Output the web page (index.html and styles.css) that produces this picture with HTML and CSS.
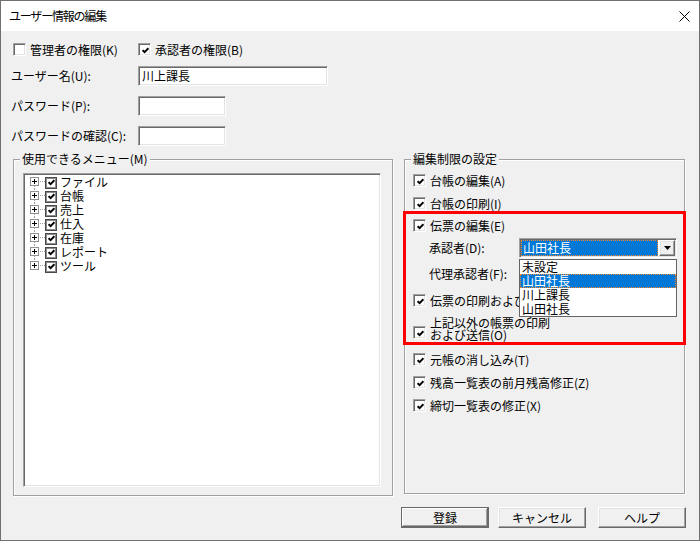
FILE: index.html
```html
<!DOCTYPE html>
<html lang="ja">

<head>
  <meta charset="UTF-8">
  <meta name="viewport" content="width=device-width, initial-scale=1.0">
  <title>ユーザー情報の編集</title>
  <link rel="stylesheet" href="styles.css">
</head>

<body>
  <div class="window">
    <!-- title bar -->
    <div class="titlebar">
      <span class="title">ユーザー情報の編集</span>
      <svg class="close" width="11" height="11" viewBox="0 0 11 11">
        <path d="M0.5 0.5L10.5 10.5M10.5 0.5L0.5 10.5" stroke="#000" stroke-width="1" />
      </svg>
    </div>

    <div class="body">
      <div class="perm-row">
        <label class="check first"><span class="cb"></span>管理者の権限(K)</label>
        <label class="check"><span class="cb"><svg viewBox="0 0 7 7" width="7" height="7"><polyline points="0.6,3.2 2.6,5.2 6.4,1.2" fill="none" stroke="#000" stroke-width="1.9" /></svg></span>承認者の権限(B)</label>
      </div>

      <div class="form">
        <span class="label">ユーザー名(U):</span>
        <div class="input wide">川上課長</div>
        <span class="label">パスワード(P):</span>
        <div class="input short"></div>
        <span class="label">パスワードの確認(C):</span>
        <div class="input short"></div>
      </div>

      <div class="groups">
        <!-- menu tree -->
        <div class="group menu-group">
          <span class="legend">使用できるメニュー(M)</span>
          <div class="tree">
            <div class="node first">
              <svg class="twig" width="15" height="14" viewBox="0 0 15 14"><rect x="0.5" y="2.5" width="8" height="8" fill="#fff" stroke="#919191" /><path d="M2 6.5h5M4.5 4v5" stroke="#000" /><path d="M10 6.5h5M4.5 11v3" stroke="#a0a0a0" stroke-dasharray="1 1" /></svg>
              <span class="tcb"><svg viewBox="0 0 7 7" width="7" height="7"><polyline points="0.6,3.2 2.6,5.2 6.4,1.2" fill="none" stroke="#000" stroke-width="1.9" /></svg></span>
              <span class="node-text">ファイル</span>
            </div>
            <div class="node">
              <svg class="twig" width="15" height="14" viewBox="0 0 15 14"><rect x="0.5" y="2.5" width="8" height="8" fill="#fff" stroke="#919191" /><path d="M2 6.5h5M4.5 4v5" stroke="#000" /><path d="M10 6.5h5M4.5 0v2M4.5 11v3" stroke="#a0a0a0" stroke-dasharray="1 1" /></svg>
              <span class="tcb"><svg viewBox="0 0 7 7" width="7" height="7"><polyline points="0.6,3.2 2.6,5.2 6.4,1.2" fill="none" stroke="#000" stroke-width="1.9" /></svg></span>
              <span class="node-text">台帳</span>
            </div>
            <div class="node">
              <svg class="twig" width="15" height="14" viewBox="0 0 15 14"><rect x="0.5" y="2.5" width="8" height="8" fill="#fff" stroke="#919191" /><path d="M2 6.5h5M4.5 4v5" stroke="#000" /><path d="M10 6.5h5M4.5 0v2M4.5 11v3" stroke="#a0a0a0" stroke-dasharray="1 1" /></svg>
              <span class="tcb"><svg viewBox="0 0 7 7" width="7" height="7"><polyline points="0.6,3.2 2.6,5.2 6.4,1.2" fill="none" stroke="#000" stroke-width="1.9" /></svg></span>
              <span class="node-text">売上</span>
            </div>
            <div class="node">
              <svg class="twig" width="15" height="14" viewBox="0 0 15 14"><rect x="0.5" y="2.5" width="8" height="8" fill="#fff" stroke="#919191" /><path d="M2 6.5h5M4.5 4v5" stroke="#000" /><path d="M10 6.5h5M4.5 0v2M4.5 11v3" stroke="#a0a0a0" stroke-dasharray="1 1" /></svg>
              <span class="tcb"><svg viewBox="0 0 7 7" width="7" height="7"><polyline points="0.6,3.2 2.6,5.2 6.4,1.2" fill="none" stroke="#000" stroke-width="1.9" /></svg></span>
              <span class="node-text">仕入</span>
            </div>
            <div class="node">
              <svg class="twig" width="15" height="14" viewBox="0 0 15 14"><rect x="0.5" y="2.5" width="8" height="8" fill="#fff" stroke="#919191" /><path d="M2 6.5h5M4.5 4v5" stroke="#000" /><path d="M10 6.5h5M4.5 0v2M4.5 11v3" stroke="#a0a0a0" stroke-dasharray="1 1" /></svg>
              <span class="tcb"><svg viewBox="0 0 7 7" width="7" height="7"><polyline points="0.6,3.2 2.6,5.2 6.4,1.2" fill="none" stroke="#000" stroke-width="1.9" /></svg></span>
              <span class="node-text">在庫</span>
            </div>
            <div class="node">
              <svg class="twig" width="15" height="14" viewBox="0 0 15 14"><rect x="0.5" y="2.5" width="8" height="8" fill="#fff" stroke="#919191" /><path d="M2 6.5h5M4.5 4v5" stroke="#000" /><path d="M10 6.5h5M4.5 0v2M4.5 11v3" stroke="#a0a0a0" stroke-dasharray="1 1" /></svg>
              <span class="tcb"><svg viewBox="0 0 7 7" width="7" height="7"><polyline points="0.6,3.2 2.6,5.2 6.4,1.2" fill="none" stroke="#000" stroke-width="1.9" /></svg></span>
              <span class="node-text">レポート</span>
            </div>
            <div class="node">
              <svg class="twig" width="15" height="14" viewBox="0 0 15 14"><rect x="0.5" y="2.5" width="8" height="8" fill="#fff" stroke="#919191" /><path d="M2 6.5h5M4.5 4v5" stroke="#000" /><path d="M10 6.5h5M4.5 0v2" stroke="#a0a0a0" stroke-dasharray="1 1" /></svg>
              <span class="tcb"><svg viewBox="0 0 7 7" width="7" height="7"><polyline points="0.6,3.2 2.6,5.2 6.4,1.2" fill="none" stroke="#000" stroke-width="1.9" /></svg></span>
              <span class="node-text">ツール</span>
            </div>
          </div>
        </div>

        <!-- edit restrictions -->
        <div class="group edit-group">
          <span class="legend">編集制限の設定</span>
          <div class="rows">
            <label class="check opt"><span class="cb"><svg viewBox="0 0 7 7" width="7" height="7"><polyline points="0.6,3.2 2.6,5.2 6.4,1.2" fill="none" stroke="#000" stroke-width="1.9" /></svg></span>台帳の編集(A)</label>
            <label class="check opt gap"><span class="cb"><svg viewBox="0 0 7 7" width="7" height="7"><polyline points="0.6,3.2 2.6,5.2 6.4,1.2" fill="none" stroke="#000" stroke-width="1.9" /></svg></span>台帳の印刷(I)</label>

            <div class="highlight">
              <label class="check opt"><span class="cb"><svg viewBox="0 0 7 7" width="7" height="7"><polyline points="0.6,3.2 2.6,5.2 6.4,1.2" fill="none" stroke="#000" stroke-width="1.9" /></svg></span>伝票の編集(E)</label>
              <div class="approver">
                <span class="approver-label">承認者(D):</span>
                <div class="combo">
                  <span class="combo-value">山田社長</span>
                  <span class="combo-btn"><svg width="7" height="4" viewBox="0 0 7 4"><path d="M0 0h7L3.5 4z" fill="#000" /></svg></span>
                  <!-- open list -->
                  <div class="combo-list">
                    <div class="combo-item">未設定</div>
                    <div class="combo-item selected">山田社長</div>
                    <div class="combo-item">川上課長</div>
                    <div class="combo-item">山田社長</div>
                  </div>
                </div>
              </div>
              <div class="approver second">
                <span class="approver-label">代理承認者(F):</span>
              </div>
              <label class="check opt gap hidden-tail"><span class="cb"><svg viewBox="0 0 7 7" width="7" height="7"><polyline points="0.6,3.2 2.6,5.2 6.4,1.2" fill="none" stroke="#000" stroke-width="1.9" /></svg></span>伝票の印刷および送信(P)</label>
              <label class="check opt two-line"><span class="cb"><svg viewBox="0 0 7 7" width="7" height="7"><polyline points="0.6,3.2 2.6,5.2 6.4,1.2" fill="none" stroke="#000" stroke-width="1.9" /></svg></span><span>上記以外の帳票の印刷<br>および送信(O)</span></label>
            </div>

            <label class="check opt after"><span class="cb"><svg viewBox="0 0 7 7" width="7" height="7"><polyline points="0.6,3.2 2.6,5.2 6.4,1.2" fill="none" stroke="#000" stroke-width="1.9" /></svg></span>元帳の消し込み(T)</label>
            <label class="check opt gap"><span class="cb"><svg viewBox="0 0 7 7" width="7" height="7"><polyline points="0.6,3.2 2.6,5.2 6.4,1.2" fill="none" stroke="#000" stroke-width="1.9" /></svg></span>残高一覧表の前月残高修正(Z)</label>
            <label class="check opt gap"><span class="cb"><svg viewBox="0 0 7 7" width="7" height="7"><polyline points="0.6,3.2 2.6,5.2 6.4,1.2" fill="none" stroke="#000" stroke-width="1.9" /></svg></span>締切一覧表の修正(X)</label>
          </div>
        </div>
      </div>

      <div class="buttons">
        <button class="btn default">登録</button>
        <button class="btn cancel">キャンセル</button>
        <button class="btn help">ヘルプ</button>
      </div>
    </div>
  </div>
</body>

</html>
```

FILE: styles.css
```css
* {
  margin: 0;
  padding: 0;
  box-sizing: border-box;
}

body {
  background: #fff;
  font-family: "Noto Sans CJK JP", "Liberation Sans", sans-serif;
  font-size: 12px;
  color: #000;
}

.window {
  width: 700px;
  height: 541px;
  border: 1px solid #707070;
  background: #f0f0f0;
  display: flex;
  flex-direction: column;
}

/* title bar */
.titlebar {
  height: 30px;
  flex-shrink: 0;
  background: #fff;
  display: flex;
  align-items: center;
  justify-content: space-between;
  padding: 0 9px 0 8px;
}

.title {
  line-height: 14px;
  letter-spacing: -1.2px;
}

.close {
  display: block;
  margin-top: 1px;
}

.body {
  padding: 12px 12px 0 10px;
}

/* checkboxes */
.check {
  display: flex;
  align-items: center;
  gap: 4px;
  height: 13px;
  line-height: 13px;
  white-space: nowrap;
}

.cb {
  width: 13px;
  height: 13px;
  flex-shrink: 0;
  background: #fff;
  border: 1px solid;
  border-color: #a0a0a0 #fff #fff #a0a0a0;
  box-shadow: inset 1px 1px #696969, inset -1px -1px #e3e3e3;
  display: flex;
  align-items: center;
  justify-content: center;
  padding: 1px 0 0 1px;
}

.cb svg {
  display: block;
}

.perm-row {
  display: flex;
  margin-left: 2px;
}

.perm-row .first {
  width: 125px;
}

/* text fields */
.form {
  display: grid;
  grid-template-columns: 127px auto;
  row-gap: 10px;
  align-items: center;
  justify-items: start;
  margin-top: 10px;
}

.label {
  line-height: 14px;
}

.input {
  height: 20px;
  background: #fff;
  border: 1px solid;
  border-color: #a0a0a0 #fff #fff #a0a0a0;
  box-shadow: inset 1px 1px #696969, inset -1px -1px #e3e3e3;
  padding: 0 3px;
  line-height: 18px;
}

.input.wide {
  width: 190px;
}

.input.short {
  width: 88px;
}

/* group boxes */
.groups {
  display: grid;
  grid-template-columns: 380px 281px;
  column-gap: 11px;
  align-items: start;
  margin: 13px 0 0 2px;
}

.group {
  border: 1px solid #a0a0a0;
  box-shadow: 1px 1px 0 #fff, inset 1px 1px 0 #fff;
}

.menu-group {
  height: 337px;
}

.edit-group {
  height: 335px;
}

.legend {
  display: block;
  width: fit-content;
  margin: -8px 0 0 6px;
  padding: 0 2px;
  background: #f0f0f0;
  line-height: 14px;
}

/* tree */
.tree {
  width: 358px;
  height: 314px;
  margin: 7px 0 0 9px;
  background: #fff;
  border: 1px solid;
  border-color: #a0a0a0 #fff #fff #a0a0a0;
  box-shadow: inset 1px 1px #696969, inset -1px -1px #e3e3e3;
  padding: 1px 0 0 6px;
}

.node {
  display: flex;
  align-items: center;
  height: 14px;
}

.twig {
  display: block;
  flex-shrink: 0;
  shape-rendering: crispEdges;
}

.tcb {
  width: 12px;
  height: 12px;
  flex-shrink: 0;
  background: #fff;
  border: 1px solid #4a4a4a;
  box-shadow: inset 0 0 0 1px #8c8c8c;
  display: flex;
  align-items: center;
  justify-content: center;
  margin-top: 1px;
}

.tcb svg {
  display: block;
}

.node-text {
  margin-left: 3px;
  line-height: 14px;
  white-space: nowrap;
}

/* edit restriction rows */
.rows {
  padding-left: 8px;
  margin-top: 8px;
}

.opt.gap {
  margin-top: 10px;
}

.highlight {
  width: 283px;
  margin: 1px 0 0 -10px;
  border: 3px solid #ff0000;
  padding: 5px 0 1px 7px;
}

.approver {
  display: flex;
  align-items: center;
  height: 20px;
  margin-top: 6px;
}

.approver-label {
  width: 106px;
  padding-left: 16px;
  line-height: 14px;
  white-space: nowrap;
}

/* the open list covers the end of this label */
.hidden-tail {
  width: 106px;
  overflow: hidden;
}

.two-line {
  height: 24px;
  align-items: flex-start;
  margin-top: 10px;
  line-height: 12px;
}

.two-line .cb {
  margin-top: 9px;
}

.opt.after {
  margin-top: 8px;
}

/* combo box */
.combo {
  position: relative;
  width: 158px;
  height: 20px;
  background: #fff;
  border: 1px solid;
  border-color: #a0a0a0 #fff #fff #a0a0a0;
  box-shadow: inset 1px 1px #696969, inset -1px -1px #e3e3e3;
  padding: 1px;
  display: flex;
  gap: 1px;
}

.combo-value {
  flex: 1;
  height: 16px;
  background: #0078d7;
  color: #fff;
  border: 1px dotted #ff8728;
  line-height: 14px;
  padding-left: 1px;
}

.combo-btn {
  width: 16px;
  height: 16px;
  background: #f0f0f0;
  border: 1px solid;
  border-color: #fff #696969 #696969 #fff;
  box-shadow: inset -1px -1px #a0a0a0, inset 1px 1px #e3e3e3;
  display: flex;
  align-items: center;
  justify-content: center;
}

.combo-btn svg {
  display: block;
}

.combo-list {
  position: absolute;
  top: 20px;
  left: -1px;
  width: 158px;
  background: #fff;
  border: 1px solid #646464;
  z-index: 2;
}

.combo-item {
  height: 14px;
  line-height: 14px;
  padding-left: 2px;
}

.combo-item.selected {
  background: #0078d7;
  color: #fff;
  outline: 1px dotted #ff8728;
  outline-offset: -1px;
}

/* buttons */
.buttons {
  display: flex;
  justify-content: flex-end;
  margin-top: 11px;
  padding-right: 1px;
}

.btn {
  width: 88px;
  height: 21px;
  font-family: inherit;
  font-size: 12px;
  line-height: 17px;
  color: #000;
  background: #f0f0f0;
  border: 1px solid;
  border-color: #fff #696969 #696969 #fff;
  box-shadow: inset -1px -1px #a0a0a0, inset 1px 1px #e3e3e3;
}

.btn.default {
  border-color: #696969;
  box-shadow: inset -1px -1px #696969, inset 1px 1px #fff, inset -2px -2px #a0a0a0;
}

.btn.cancel {
  margin-left: 9px;
}

.btn.help {
  margin-left: 12px;
}
```
